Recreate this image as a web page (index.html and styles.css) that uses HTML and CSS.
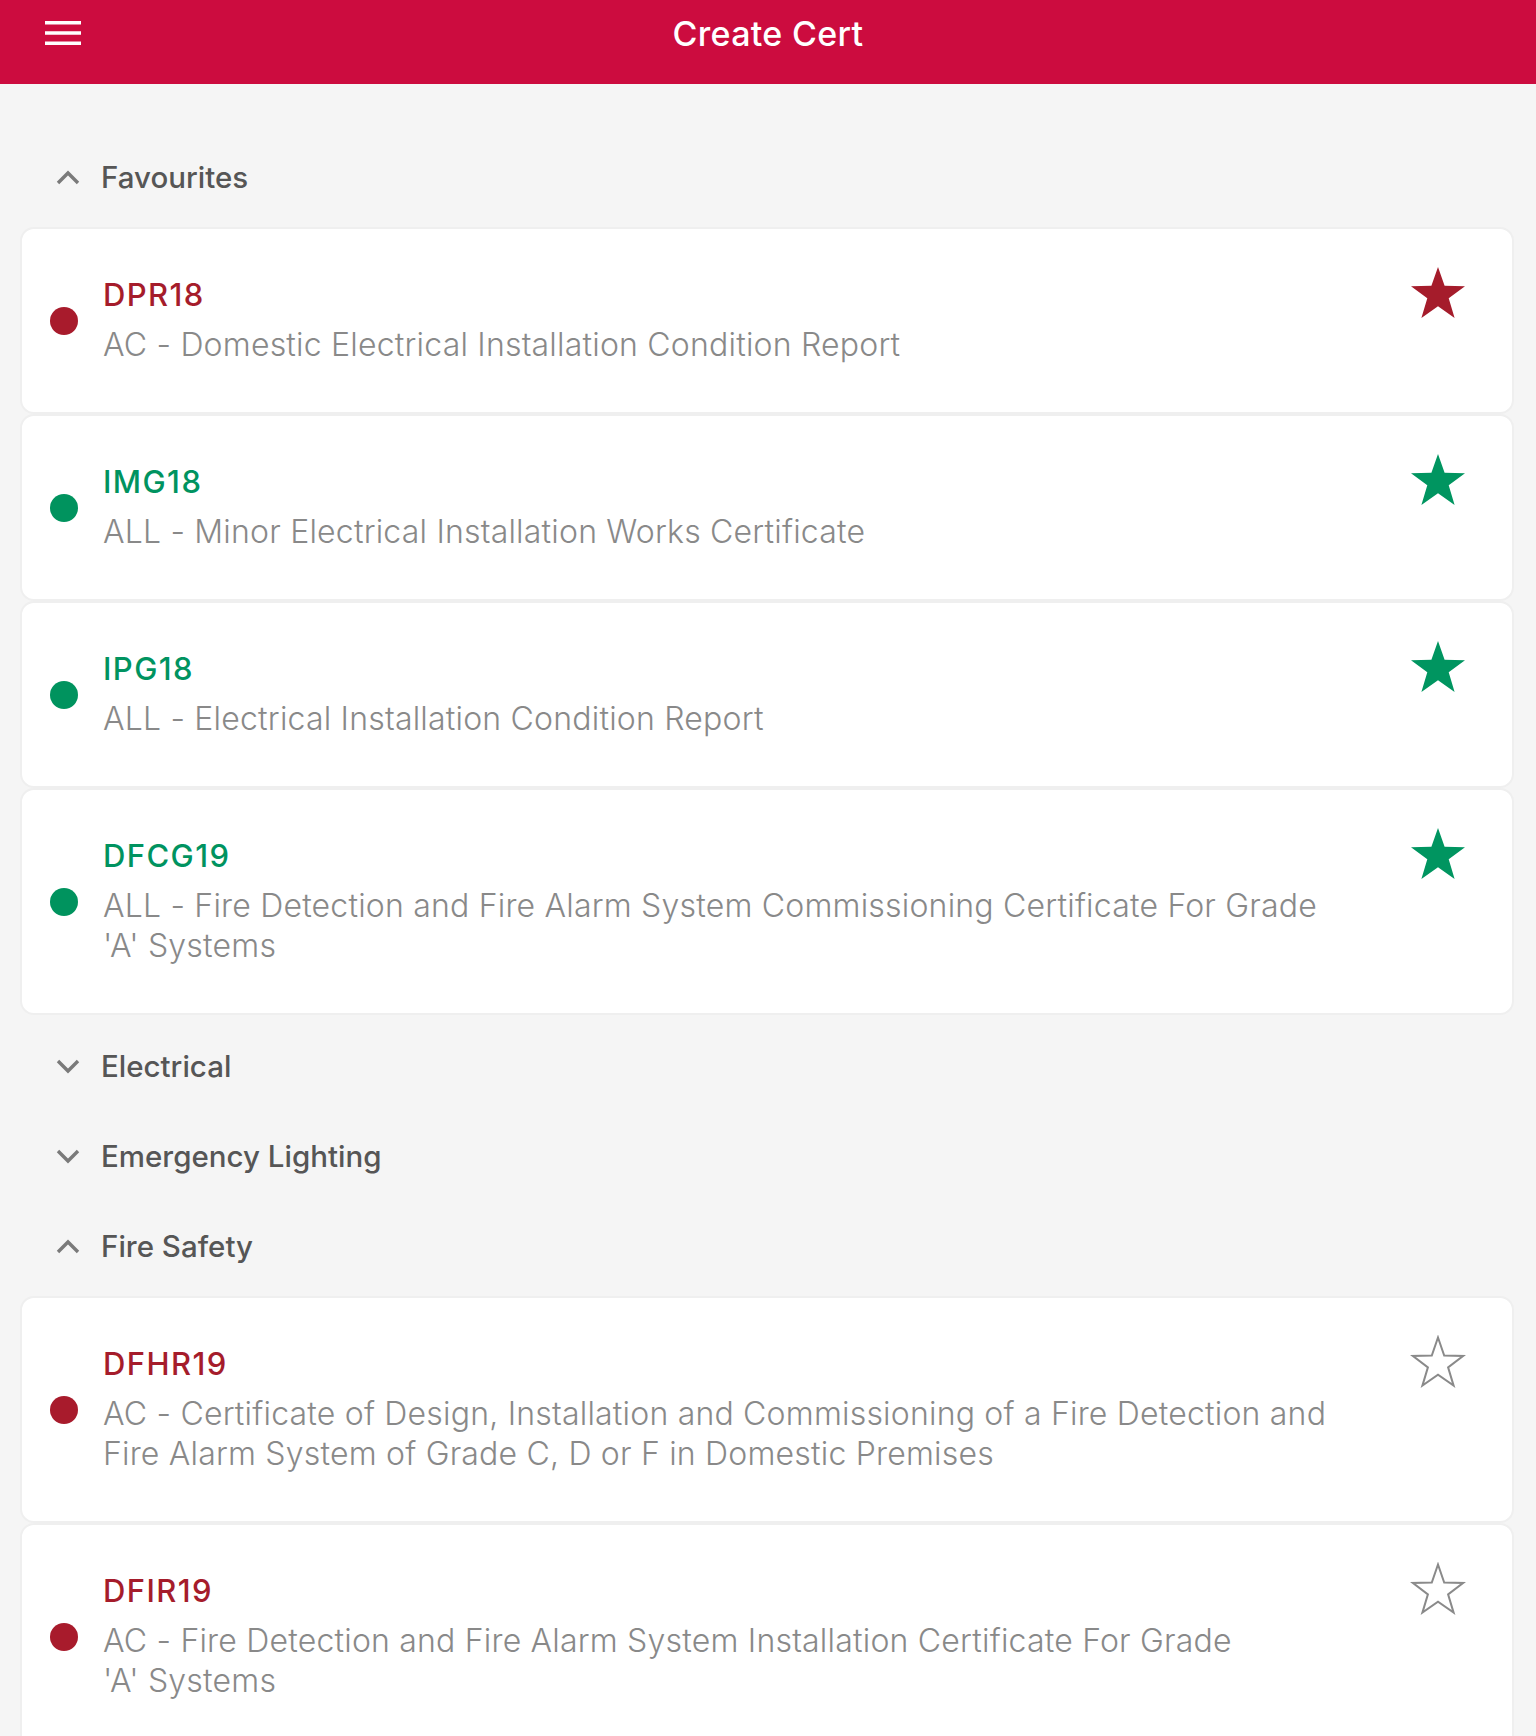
FILE: index.html
```html
<!DOCTYPE html>
<html lang="en">
<head>
<meta charset="utf-8">
<title>Create Cert</title>
<link rel="stylesheet" href="styles.css">
</head>
<body>
<header class="topbar">
  <button class="menu-btn" aria-label="Menu">
    <svg width="36" height="24" viewBox="0 0 36 24"><rect x="0" y="0" width="36" height="3.5" fill="#fff"/><rect x="0" y="10.25" width="36" height="3.5" fill="#fff"/><rect x="0" y="20.5" width="36" height="3.5" fill="#fff"/></svg>
  </button>
  <h1 class="topbar-title">Create Cert</h1>
</header>

<main class="content">
  <section class="group">
    <div class="group-head">
      <svg class="chev" width="24" height="15" viewBox="0 0 24 15"><polyline points="2,13 12,3 22,13" fill="none" stroke="#7a7a7a" stroke-width="3.4"/></svg>
      <span class="group-title">Favourites</span>
    </div>
    <div class="cards">
      <div class="card">
        <span class="dot dot-red"></span>
        <div class="card-text">
          <div class="code code-red">DPR18</div>
          <div class="desc">AC - Domestic Electrical Installation Condition Report</div>
        </div>
        <svg class="star" width="56" height="54" viewBox="0 0 56 54"><polygon points="28,1 34.6,19.8 55,20.2 38.7,32.3 44.6,52 28,40.3 11.4,52 17.3,32.3 1,20.2 21.4,19.8" fill="#a51c2b"/></svg>
      </div>
      <div class="card">
        <span class="dot dot-green"></span>
        <div class="card-text">
          <div class="code code-green">IMG18</div>
          <div class="desc">ALL - Minor Electrical Installation Works Certificate</div>
        </div>
        <svg class="star" width="56" height="54" viewBox="0 0 56 54"><polygon points="28,1 34.6,19.8 55,20.2 38.7,32.3 44.6,52 28,40.3 11.4,52 17.3,32.3 1,20.2 21.4,19.8" fill="#009560"/></svg>
      </div>
      <div class="card">
        <span class="dot dot-green"></span>
        <div class="card-text">
          <div class="code code-green">IPG18</div>
          <div class="desc">ALL - Electrical Installation Condition Report</div>
        </div>
        <svg class="star" width="56" height="54" viewBox="0 0 56 54"><polygon points="28,1 34.6,19.8 55,20.2 38.7,32.3 44.6,52 28,40.3 11.4,52 17.3,32.3 1,20.2 21.4,19.8" fill="#009560"/></svg>
      </div>
      <div class="card">
        <span class="dot dot-green"></span>
        <div class="card-text">
          <div class="code code-green">DFCG19</div>
          <div class="desc">ALL - Fire Detection and Fire Alarm System Commissioning Certificate For Grade 'A'&nbsp;Systems</div>
        </div>
        <svg class="star" width="56" height="54" viewBox="0 0 56 54"><polygon points="28,1 34.6,19.8 55,20.2 38.7,32.3 44.6,52 28,40.3 11.4,52 17.3,32.3 1,20.2 21.4,19.8" fill="#009560"/></svg>
      </div>
    </div>
  </section>

  <section class="group">
    <div class="group-head">
      <svg class="chev" width="24" height="15" viewBox="0 0 24 15"><polyline points="2,2 12,12 22,2" fill="none" stroke="#7a7a7a" stroke-width="3.4"/></svg>
      <span class="group-title">Electrical</span>
    </div>
  </section>

  <section class="group">
    <div class="group-head">
      <svg class="chev" width="24" height="15" viewBox="0 0 24 15"><polyline points="2,2 12,12 22,2" fill="none" stroke="#7a7a7a" stroke-width="3.4"/></svg>
      <span class="group-title">Emergency Lighting</span>
    </div>
  </section>

  <section class="group">
    <div class="group-head">
      <svg class="chev" width="24" height="15" viewBox="0 0 24 15"><polyline points="2,13 12,3 22,13" fill="none" stroke="#7a7a7a" stroke-width="3.4"/></svg>
      <span class="group-title">Fire Safety</span>
    </div>
    <div class="cards">
      <div class="card">
        <span class="dot dot-red"></span>
        <div class="card-text">
          <div class="code code-red">DFHR19</div>
          <div class="desc">AC - Certificate of Design, Installation and Commissioning of a Fire Detection and Fire Alarm System of Grade C, D or F in Domestic Premises</div>
        </div>
        <svg class="star" width="56" height="54" viewBox="0 0 56 54"><polygon points="28,2.5 34.2,20.5 53.3,20.9 38.1,32.4 43.6,50.6 28,39.8 12.4,50.6 17.9,32.4 2.7,20.9 21.8,20.5" fill="none" stroke="#8a8a8a" stroke-width="2"/></svg>
      </div>
      <div class="card">
        <span class="dot dot-red"></span>
        <div class="card-text">
          <div class="code code-red">DFIR19</div>
          <div class="desc">AC - Fire Detection and Fire Alarm System Installation Certificate For Grade 'A'&nbsp;Systems</div>
        </div>
        <svg class="star" width="56" height="54" viewBox="0 0 56 54"><polygon points="28,2.5 34.2,20.5 53.3,20.9 38.1,32.4 43.6,50.6 28,39.8 12.4,50.6 17.9,32.4 2.7,20.9 21.8,20.5" fill="none" stroke="#8a8a8a" stroke-width="2"/></svg>
      </div>
    </div>
  </section>
</main>
</body>
</html>
```

FILE: styles.css
```css
* { box-sizing: border-box; }
html, body { margin: 0; padding: 0; }
body {
  background: #f5f5f5;
  font-family: Inter, "Noto Sans", "Liberation Sans", sans-serif;
  min-height: 1736px;
}
.topbar {
  height: 84px;
  background: #cc0c3f;
  display: flex;
  align-items: center;
  justify-content: center;
  position: relative;
}
.menu-btn {
  position: absolute;
  left: 45px;
  top: 21px;
  padding: 0;
  border: 0;
  background: none;
  line-height: 0;
}
.topbar-title {
  margin: 0 0 18px 0;
  color: #fff;
  font-size: 34px;
  font-weight: 500;
  letter-spacing: 0.3px;
}
.content {
  padding: 48px 22px 0 20px;
}
.group-head {
  height: 90px;
  display: flex;
  align-items: center;
  padding-left: 36px;
}
.chev { margin-right: 21px; }
.group-title {
  font-size: 29.5px;
  font-weight: 500;
  color: #565656;
}
.cards {
  margin: 5px 0 6px 0;
}
.card {
  background: #fff;
  border: 2px solid #efefef;
  border-radius: 14px;
  display: flex;
  align-items: center;
  padding: 37px 46px 47px 28px;
}
.dot {
  width: 28px;
  height: 28px;
  border-radius: 50%;
  flex: none;
  margin-top: 10px;
}
.dot-red { background: #a81b2c; }
.dot-green { background: #00935e; }
.card-text {
  flex: 1;
  padding: 9px 0 0 0;
  margin: 0 72px 0 25px;
}
.code {
  font-size: 31px;
  font-weight: 500;
  line-height: 40px;
  letter-spacing: 1.4px;
  margin-bottom: 10px;
}
.code-red { color: #a51c2b; }
.code-green { color: #009360; }
.desc {
  font-size: 32px;
  font-weight: 300;
  line-height: 40px;
  letter-spacing: 0.2px;
  color: #898989;
}
.star {
  flex: none;
  align-self: flex-start;
}
```
